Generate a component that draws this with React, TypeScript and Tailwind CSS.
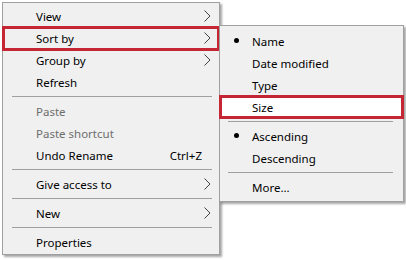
import React from "react";

const Chevron = () => (
  <svg width="7" height="12" viewBox="0 0 7 12" className="absolute right-[8px] top-[5px]">
    <polyline points="0.5,0.5 6,6 0.5,11.5" fill="none" stroke="#444" strokeWidth="1" />
  </svg>
);

type Item = {
  label: string;
  disabled?: boolean;
  arrow?: boolean;
  shortcut?: string;
  boxed?: boolean;
};

const Row = ({ item }: { item: Item }) => (
  <div
    className={`relative h-[22px] flex items-center pl-[33px] pt-[2px] ${item.disabled ? "text-[#6d6d6d]" : "text-black"}`}
  >
    <span>{item.label}</span>
    {item.shortcut && <span className="absolute right-[17px] top-[6px]">{item.shortcut}</span>}
    {item.arrow && <Chevron />}
    {item.boxed && (
      <div className="absolute -left-[1px] -right-[1px] -top-[1px] -bottom-[2px] border-[3px] border-[#c42633]" />
    )}
  </div>
);

const Sep = ({ cls }: { cls: string }) => (
  <div className="h-[7px] flex items-center">
    <div className={`h-px flex-1 bg-[#a0a0a0] ${cls}`} />
  </div>
);

const SubRow = ({ label, bullet, boxed }: { label: string; bullet?: boolean; boxed?: boolean }) => (
  <div className={`relative h-[22px] flex items-center pl-[32px] pt-[1px] ${boxed ? "bg-white" : ""}`}>
    {bullet && <div className="absolute left-[14px] top-[8px] w-[5px] h-[5px] rounded-full bg-black" />}
    <span>{label}</span>
    {boxed && (
      <div className="absolute -left-[1px] -right-[1px] -top-[1px] -bottom-[1px] border-[3px] border-[#c42633]" />
    )}
  </div>
);

export default function App() {
  return (
    <div
      className="relative w-[406px] h-[260px] bg-white overflow-hidden text-[11.5px] leading-none"
      style={{ fontFamily: '"Noto Sans", "Segoe UI", sans-serif' }}
    >
      <div className="ml-[2px] mt-[2px] w-[218px] bg-[#f0f0f0] border border-[#a0a0a0] pt-[2px] pb-[1px] shadow-[2px_2px_2px_rgba(0,0,0,0.35)]">
        <Row item={{ label: "View", arrow: true }} />
        <Row item={{ label: "Sort by", arrow: true, boxed: true }} />
        <Row item={{ label: "Group by", arrow: true }} />
        <Row item={{ label: "Refresh" }} />
        <Sep cls="ml-[9px] mr-[7px]" />
        <Row item={{ label: "Paste", disabled: true }} />
        <Row item={{ label: "Paste shortcut", disabled: true }} />
        <Row item={{ label: "Undo Rename", shortcut: "Ctrl+Z" }} />
        <Sep cls="ml-[9px] mr-[7px]" />
        <Row item={{ label: "Give access to", arrow: true }} />
        <Sep cls="ml-[9px] mr-[7px]" />
        <Row item={{ label: "New", arrow: true }} />
        <Sep cls="ml-[9px] mr-[7px]" />
        <Row item={{ label: "Properties" }} />
      </div>

      <div className="absolute left-[219px] top-[25px] w-[185px] bg-[#f0f0f0] border border-[#a0a0a0] pt-[4px] pb-[3px] shadow-[2px_2px_2px_rgba(0,0,0,0.35)]">
        <SubRow label="Name" bullet />
        <SubRow label="Date modified" />
        <SubRow label="Type" />
        <SubRow label="Size" boxed />
        <Sep cls="ml-[8px] mr-[10px]" />
        <SubRow label="Ascending" bullet />
        <SubRow label="Descending" />
        <Sep cls="ml-[8px] mr-[10px]" />
        <SubRow label="More..." />
      </div>
    </div>
  );
}
